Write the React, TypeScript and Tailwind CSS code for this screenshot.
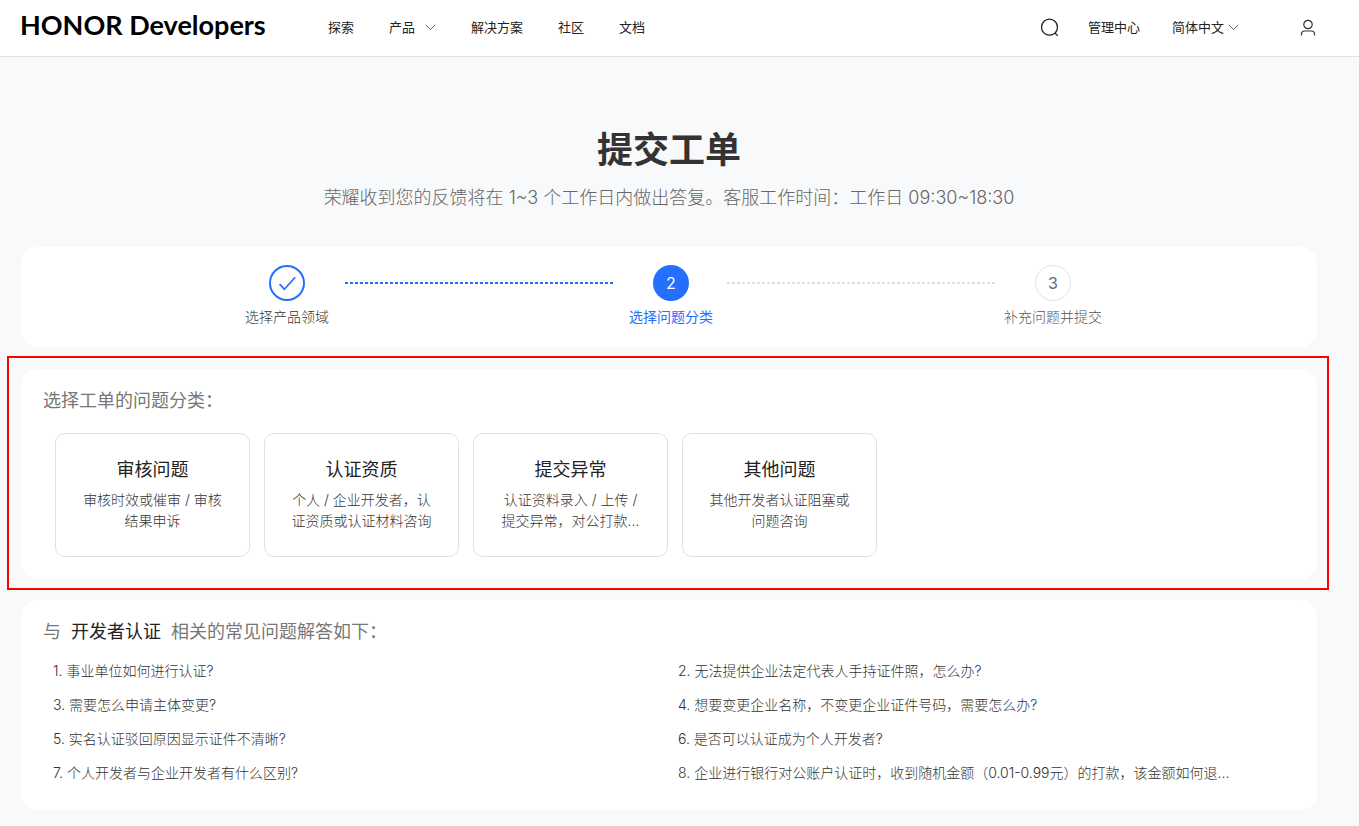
import { ReactNode } from 'react'

type StepStatus = 'done' | 'active' | 'pending'

type Step = {
  index: number
  label: string
  status: StepStatus
}

type Category = {
  name: string
  description: string
}

const steps: Step[] = [
  { index: 1, label: '选择产品领域', status: 'done' },
  { index: 2, label: '选择问题分类', status: 'active' },
  { index: 3, label: '补充问题并提交', status: 'pending' }
]

const categories: Category[] = [
  { name: '审核问题', description: '审核时效或催审 / 审核结果申诉' },
  { name: '认证资质', description: '个人 / 企业开发者，认证资质或认证材料咨询' },
  { name: '提交异常', description: '认证资料录入 / 上传 / 提交异常，对公打款...' },
  { name: '其他问题', description: '其他开发者认证阻塞或问题咨询' }
]

const questions = [
  '事业单位如何进行认证?',
  '无法提供企业法定代表人手持证件照，怎么办?',
  '需要怎么申请主体变更?',
  '想要变更企业名称，不变更企业证件号码，需要怎么办?',
  '实名认证驳回原因显示证件不清晰?',
  '是否可以认证成为个人开发者?',
  '个人开发者与企业开发者有什么区别?',
  '企业进行银行对公账户认证时，收到随机金额（0.01-0.99元）的打款，该金额如何退...'
]

export default function App() {
  return (
    <div
      lang="zh-CN"
      className="min-h-screen bg-[#f8f9fb] font-['Inter','Noto_Sans_CJK_SC',sans-serif] font-light text-[#333]">
      <Header />
      <main className="pt-[69px] pr-[42px] pb-4 pl-[21px]">
        <h1 className="text-center text-4xl leading-[48px] font-semibold">提交工单</h1>
        <p className="mt-2.5 text-center text-lg leading-[28px] text-[#666]">
          荣耀收到您的反馈将在 1~3 个工作日内做出答复。客服工作时间：工作日 09:30~18:30
        </p>
        <Steps />
        <CategoryPanel />
        <FaqPanel />
      </main>
    </div>
  )
}

function Header() {
  return (
    <header className="flex h-[57px] items-center border-b border-[#e2e2e2] bg-white pr-[42px] pb-px pl-5 text-[13px] font-normal text-[#222]">
      <a
        href="#"
        className="w-[308px] pb-1.5 font-['Lato',sans-serif] text-[27px] leading-8 font-bold whitespace-nowrap text-black">
        HONOR Developers
      </a>
      <nav className="flex items-center gap-[35px]">
        <a href="#">探索</a>
        <button type="button" className="flex items-center gap-2.5">
          产品
          <ChevronIcon />
        </button>
        <a href="#">解决方案</a>
        <a href="#">社区</a>
        <a href="#">文档</a>
      </nav>
      <div className="ml-auto flex items-center">
        <button type="button" aria-label="搜索" className="mr-7">
          <svg width="20" height="20" viewBox="0 0 20 20" fill="none" stroke="#222" strokeWidth="1.3">
            <circle cx="9.5" cy="9.2" r="8" />
            <path d="M15 15l2.7 2.7" />
          </svg>
        </button>
        <a href="#" className="mr-8">
          管理中心
        </a>
        <button type="button" className="mr-[60px] flex items-center gap-1">
          简体中文
          <ChevronIcon />
        </button>
        <button type="button" aria-label="个人中心">
          <svg width="18" height="18" viewBox="0 0 18 18" fill="none" stroke="#333" strokeWidth="1.2">
            <circle cx="9" cy="5.5" r="4.2" />
            <path d="M2.5 16.5v-1.7a2.8 2.8 0 0 1 2.8-2.8h7.4a2.8 2.8 0 0 1 2.8 2.8v1.7" />
          </svg>
        </button>
      </div>
    </header>
  )
}

function Steps() {
  return (
    <section className="mt-[35px] flex h-[100px] justify-center rounded-2xl bg-white pt-[18px]">
      <StepItem step={steps[0]} />
      <div className="mt-[17px] h-0.5 w-[270px] bg-[repeating-linear-gradient(90deg,#256fff_0_3px,transparent_3px_5px)]" />
      <StepItem step={steps[1]} />
      <div className="mt-[17px] h-0.5 w-[270px] bg-[repeating-linear-gradient(90deg,#e0deea_0_3px,transparent_3px_5px)]" />
      <StepItem step={steps[2]} />
    </section>
  )
}

const circleStyles: Record<StepStatus, string> = {
  done: 'border-2 border-[#256fff] text-[#256fff]',
  active: 'bg-[#256fff] text-white',
  pending: 'border border-[#e0dfe8] text-[#666]'
}

const labelStyles: Record<StepStatus, string> = {
  done: 'text-[#333]',
  active: 'text-[#256fff] font-normal',
  pending: 'text-[#555]'
}

function StepItem({ step }: { step: Step }) {
  return (
    <div className={`flex flex-col items-center ${step.status === 'done' ? 'w-[116px]' : 'w-28'}`}>
      <div className={`flex h-9 w-9 items-center justify-center rounded-full ${circleStyles[step.status]}`}>
        {step.status === 'done' ? (
          <svg width="20" height="20" viewBox="0 0 20 20" fill="none" stroke="currentColor" strokeWidth="1.7">
            <path d="M2.6 11.2l4.7 5L18.2 4.2" />
          </svg>
        ) : (
          <span className="text-base leading-5 font-normal">{step.index}</span>
        )}
      </div>
      <span className={`mt-1.5 text-sm leading-5 whitespace-nowrap ${labelStyles[step.status]}`}>
        {step.label}
      </span>
    </div>
  )
}

function CategoryPanel() {
  return (
    <div className="mt-[9px] -mr-3 -ml-3.5 border-2 border-[#ff0000] pt-[11px] pr-2.5 pb-[9px] pl-3">
      <section className="rounded-2xl bg-white px-[22px] pt-[18px] pb-[22px]">
        <PanelTitle>选择工单的问题分类：</PanelTitle>
        <div className="mt-[18px] ml-3 flex gap-3.5">
          {categories.map(category => (
            <button
              key={category.name}
              type="button"
              className="flex h-[124px] w-[195px] flex-col items-center rounded-[10px] border border-[#e0dfe8] px-6 pt-[22px]">
              <span className="text-lg leading-[28px] font-normal text-[#222]">{category.name}</span>
              <span className="mt-[5px] text-sm leading-[21px] text-[#333]">{category.description}</span>
            </button>
          ))}
        </div>
      </section>
    </div>
  )
}

function FaqPanel() {
  return (
    <section className="mt-2.5 rounded-2xl bg-white px-[22px] pt-[18px] pb-5">
      <PanelTitle>
        <span>与</span>
        <span className="text-[#222]">开发者认证</span>
        <span>相关的常见问题解答如下：</span>
      </PanelTitle>
      <ul className="mt-2 -mr-2 ml-2.5 grid grid-cols-2">
        {questions.map((question, index) => (
          <li key={question} className="truncate text-sm leading-[34px] text-[#333]">
            <a href="#">
              {index + 1}. {question}
            </a>
          </li>
        ))}
      </ul>
    </section>
  )
}

function PanelTitle({ children }: { children: ReactNode }) {
  return <h2 className="flex gap-2.5 text-lg leading-[28px] font-normal text-[#777]">{children}</h2>
}

function ChevronIcon() {
  return (
    <svg width="11" height="7" viewBox="0 0 11 7" fill="none" stroke="#555" strokeWidth="0.9">
      <path d="M0.8 0.8l4.7 4.7 4.7-4.7" />
    </svg>
  )
}
